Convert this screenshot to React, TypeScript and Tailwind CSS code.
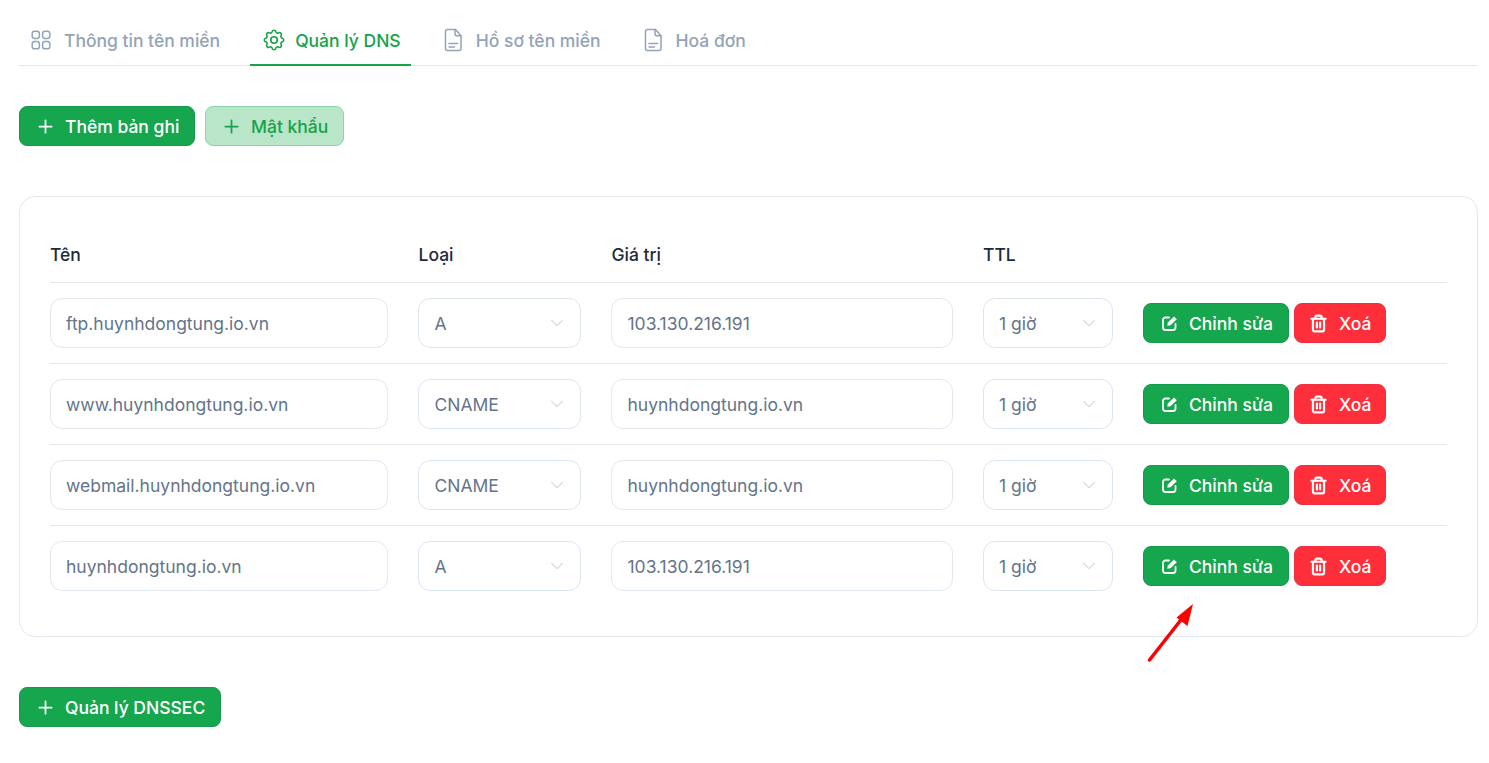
import React from "react";
import { ChevronDown, Plus, Trash2 } from "lucide-react";
import { TbSettings } from "react-icons/tb";

function GridIcon({ className }: { className?: string }) {
  return (
    <svg className={className} width="20" height="20" viewBox="0 0 20 20" fill="none" stroke="currentColor" strokeWidth="1.5">
      <rect x="1.2" y="1.2" width="7.2" height="7.2" rx="2.4" />
      <rect x="11.6" y="1.2" width="7.2" height="7.2" rx="2.4" />
      <rect x="1.2" y="11.6" width="7.2" height="7.2" rx="2.4" />
      <rect x="11.6" y="11.6" width="7.2" height="7.2" rx="2.4" />
    </svg>
  );
}

function DocIcon({ className }: { className?: string }) {
  return (
    <svg className={className} width="20" height="24" viewBox="0 0 20 24" fill="none" stroke="currentColor" strokeWidth="1.5" strokeLinejoin="round" strokeLinecap="round">
      <path d="M4.500 1.500h8l5.500 6.200V20.500a2 2 0 0 1-2 2H4.500a2 2 0 0 1-2-2V3.500a2 2 0 0 1 2-2z" />
      <path d="M12 1.700v4a2 2 0 0 0 2 2h4" />
      <path d="M6 15.500h8.500M6 19h5.500" />
    </svg>
  );
}

function GearIcon({ className }: { className?: string }) {
  return <TbSettings className={`${className} my-[-3px] ml-[-1.5px] mr-[-4.5px]`} size={26} strokeWidth={1.5} />;
}

function EditIcon() {
  return (
    <svg className="shrink-0" width="17" height="17" viewBox="0 0 17 17" fill="none">
      <path d="M8 2.500H4.500a2.500 2.500 0 0 0-2.500 2.500v7.500a2.500 2.500 0 0 0 2.500 2.500H12a2.500 2.500 0 0 0 2.500-2.500V9" stroke="currentColor" strokeWidth="1.8" strokeLinecap="round" />
      <path d="M6.300 10.700 L6.800 7.600 L13 1.500 L15.800 4.300 L9.500 10.300 Z" fill="currentColor" />
    </svg>
  );
}

const tabs = [
  { label: "Thông tin tên miền", Icon: GridIcon, active: false },
  { label: "Quản lý DNS", Icon: GearIcon, active: true },
  { label: "Hồ sơ tên miền", Icon: DocIcon, active: false },
  { label: "Hoá đơn", Icon: DocIcon, active: false },
];

const rows = [
  ["ftp.huynhdongtung.io.vn", "A", "103.130.216.191"],
  ["www.huynhdongtung.io.vn", "CNAME", "huynhdongtung.io.vn"],
  ["webmail.huynhdongtung.io.vn", "CNAME", "huynhdongtung.io.vn"],
  ["huynhdongtung.io.vn", "A", "103.130.216.191"],
];

const green = "flex items-center h-10 rounded-lg border border-[#15994a] bg-[#16a74e] text-white text-[17.5px] font-medium";

function Field({ value, className }: { value: string; className: string }) {
  return (
    <div className={`flex items-center h-[50px] rounded-xl border border-[#e2e8f0] bg-white pt-[2px] text-[17.5px] text-[#64748b] ${className}`}>
      {value}
    </div>
  );
}

function Select({ value, className }: { value: string; className: string }) {
  return (
    <div className={`flex items-center justify-between h-[50px] rounded-xl border border-[#dde5f0] bg-white pr-[12px] text-[17.5px] text-[#64748b] ${className}`}>
      <span className="pt-[2px]">{value}</span>
      <ChevronDown size={22} strokeWidth={1.25} className="text-[#d5dde8]" />
    </div>
  );
}

function Label({ children }: { children: React.ReactNode }) {
  return <span className="whitespace-nowrap pt-[2px]">{children}</span>;
}

export default function App() {
  return (
    <div className="relative h-[763px] overflow-hidden bg-white pl-[19px] pr-[11px] font-['Inter',sans-serif]">
      <div className="flex h-[66px] items-end gap-5 border-b border-[#e5e7eb]">
        {tabs.map(({ label, Icon, active }) => (
          <div
            key={label}
            className={`flex h-[50px] shrink-0 items-center gap-[13px] pl-3 pr-[10px] ${
              active ? "mb-[-1px] border-b-2 border-[#16a34a] text-[#16a34a]" : "text-[#94a3b8]"
            } text-[17.5px] font-medium`}
          >
            <Icon className="shrink-0" />
            <Label>{label}</Label>
          </div>
        ))}
      </div>

      <div className="mt-10 flex gap-[10px]">
        <button className={`${green} w-[176px] gap-[9px] pl-[15px]`}>
          <Plus size={21} strokeWidth={2} />
          <Label>Thêm bản ghi</Label>
        </button>
        <button className="flex h-10 w-[139px] items-center gap-[9px] rounded-lg border border-[#8fd4a8] bg-[#b9e5c9] pl-[15px] text-[17.5px] font-medium text-[#16a34a]">
          <Plus size={21} strokeWidth={2} />
          <Label>Mật khẩu</Label>
        </button>
      </div>

      <div className="mt-[50px] rounded-2xl border border-[#e2e8f0] bg-white p-[30px]">
        <div className="flex h-[56px] items-center border-b border-[#e5e7eb] pt-[2px] text-[17.5px] font-medium text-[#1e293b]">
          <div className="w-[368.5px]">Tên</div>
          <div className="w-[193px]">Loại</div>
          <div className="w-[371.5px]">Giá trị</div>
          <div>TTL</div>
        </div>
        {rows.map(([name, type, value], i) => (
          <div key={name} className={`flex items-center pb-[15px] pt-[15px] ${i < rows.length - 1 ? "border-b border-[#e5e7eb]" : ""}`}>
            <Field value={name} className="w-[338px] mr-[30px] pl-[15px]" />
            <Select value={type} className="w-[163px] mr-[30px] pl-[15.5px]" />
            <Field value={value} className="w-[342px] mr-[30px] pl-[15.5px]" />
            <Select value="1 giờ" className="w-[130px] mr-[30px] pl-[15px]" />
            <div className="flex gap-[5px]">
              <button className={`${green} w-[146px] gap-[11px] pl-[17px]`}>
                <EditIcon />
                <Label>Chỉnh sửa</Label>
              </button>
              <button className="flex h-10 w-[92px] items-center gap-[11px] rounded-lg border border-[#f03040] bg-[#ff2e3b] pl-[14px] text-[17.5px] font-medium text-white">
                <Trash2 size={19} strokeWidth={2.8} />
                <Label>Xoá</Label>
              </button>
            </div>
          </div>
        ))}
      </div>

      <button className={`${green} mt-[50px] w-[202px] gap-[9px] pl-[15px]`}>
        <Plus size={21} strokeWidth={2} />
        <Label>Quản lý DNSSEC</Label>
      </button>

      <svg className="absolute left-[1140px] top-[596px]" width="60" height="72" viewBox="0 0 60 72" fill="none">
        <path d="M9.500 64 L44 20" stroke="#ff0000" strokeWidth="3.500" strokeLinecap="round" />
        <path d="M53 8 L47.500 30 L36.500 21.500 Z" fill="#ff0000" />
      </svg>
    </div>
  );
}
